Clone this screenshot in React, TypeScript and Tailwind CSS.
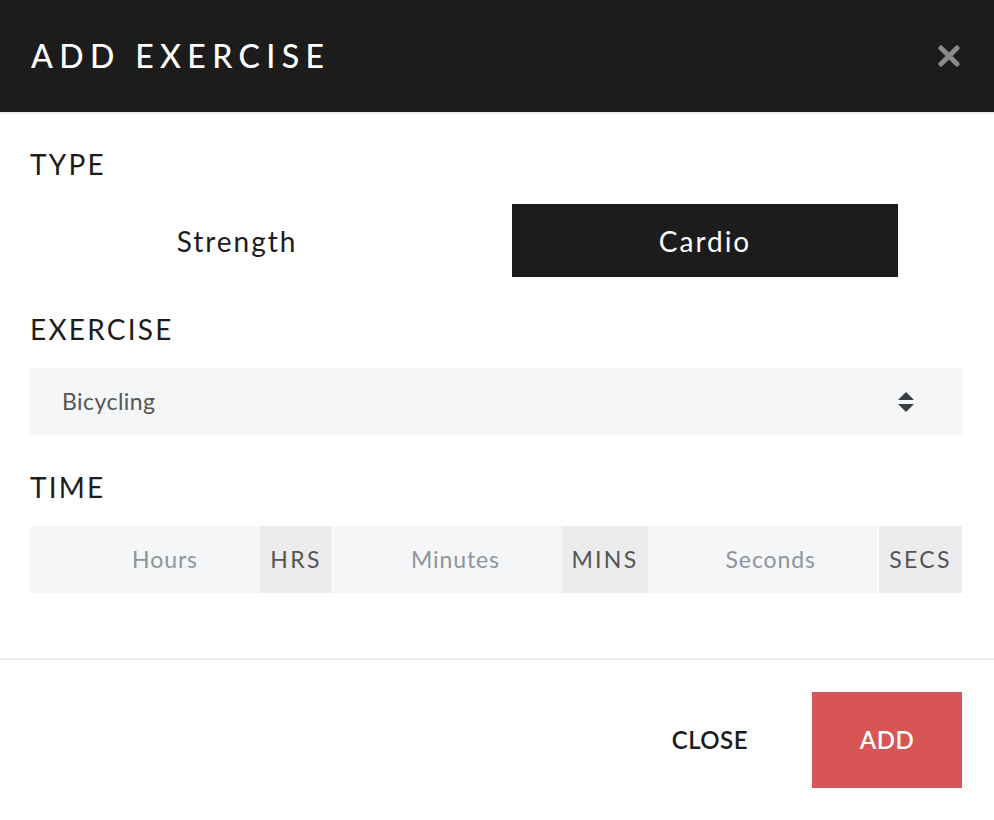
import React from "react";

const font = { fontFamily: "Lato, 'Open Sans', sans-serif" };

function TimeField({
  placeholder,
  unit,
  unitWidth,
  divider,
}: {
  placeholder: string;
  unit: string;
  unitWidth: string;
  divider: "right" | "left" | "none";
}) {
  return (
    <div className={`flex ${divider === "right" ? "border-r border-white" : ""}`}>
      <div className="flex flex-1 items-center justify-end pr-[62px] text-[23px] tracking-[0.04em] text-[#8e959c]">
        {placeholder}
      </div>
      <div
        className={`flex ${unitWidth} items-center justify-center bg-[#ececee] text-[23px] tracking-[0.1em] text-[#555] ${
          divider === "left" ? "border-l border-white" : ""
        }`}
      >
        {unit}
      </div>
    </div>
  );
}

export default function App() {
  return (
    <div className="h-[820px] w-[994px] bg-white" style={font}>
      <header className="flex h-[112px] items-center justify-between bg-[#1c1c1c] pl-[31px] pr-[34px]">
        <h1 className="text-[32px] font-medium leading-none tracking-[0.2em] text-white">ADD EXERCISE</h1>
        <svg width="22" height="22" viewBox="0 0 22 22" aria-label="Close">
          <path d="M3 3L19 19M19 3L3 19" stroke="#8a8a8a" strokeWidth="5" strokeLinecap="round" />
        </svg>
      </header>
      <div className="h-[2px] bg-[#efefef]" />

      <div className="pl-[30px] pr-[32px] pt-[34px]">
        <div className="text-[28px] leading-[32px] tracking-[0.08em] text-[#1c1c1c]">TYPE</div>
        <div className="mt-[24px] grid grid-cols-2">
          <button className="ml-[14px] h-[73px] w-[386px] text-[28px] tracking-[0.07em] text-[#1c1c1c]">Strength</button>
          <button className="ml-[16px] h-[73px] w-[386px] bg-[#1c1c1c] text-[28px] tracking-[0.07em] text-white">
            Cardio
          </button>
        </div>

        <div className="mt-[36px] text-[28px] leading-[32px] tracking-[0.08em] text-[#1c1c1c]">EXERCISE</div>
        <div className="mt-[23px] flex h-[67px] items-center justify-between bg-[#f5f6f8] pl-[32px] pr-[47px]">
          <span className="text-[23px] tracking-[0.02em] text-[#555]">Bicycling</span>
          <svg width="18" height="22" viewBox="0 0 18 22">
            <path d="M9 1L17 9H1Z M1 13H17L9 21Z" fill="#3a3d42" />
          </svg>
        </div>

        <div className="mt-[36px] text-[28px] leading-[32px] tracking-[0.08em] text-[#1c1c1c]">TIME</div>
        <div className="mt-[23px] grid h-[67px] grid-cols-[303px_315px_314px] bg-[#f5f6f8]">
          <TimeField placeholder="Hours" unit="HRS" unitWidth="w-[72px]" divider="right" />
          <TimeField placeholder="Minutes" unit="MINS" unitWidth="w-[86px]" divider="none" />
          <TimeField placeholder="Seconds" unit="SECS" unitWidth="w-[84px]" divider="left" />
        </div>
      </div>

      <div className="mt-[65px] h-[2px] bg-[#eeeeee]" />
      <div className="flex items-center justify-end gap-[64px] px-[32px] pt-[32px]">
        <button className="text-[24px] font-semibold tracking-[0.02em] text-[#1c1c1c]">CLOSE</button>
        <button className="h-[96px] w-[150px] bg-[#d85555] text-[24px] font-semibold tracking-[0.02em] text-white">
          ADD
        </button>
      </div>
    </div>
  );
}
